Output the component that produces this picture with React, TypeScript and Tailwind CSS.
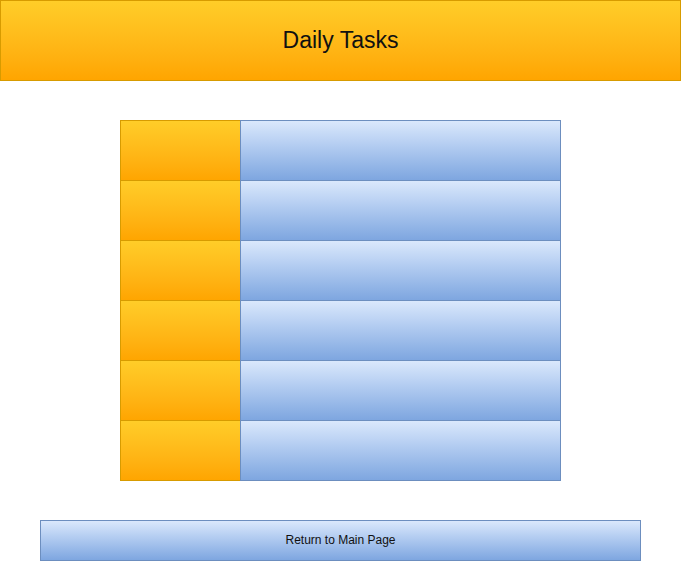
export default function App() {
  const rows = [0, 1, 2, 3, 4, 5];

  return (
    <div className="w-[681px] h-[561px] bg-white" style={{ fontFamily: '"Liberation Sans", Arial, sans-serif' }}>
      {/* Header */}
      <div className="flex h-[81px] w-[681px] items-center justify-center border border-[#d79b00] bg-linear-to-b from-[#ffcd28] to-[#ffa500]">
        <h1 className="text-[23px] leading-none text-[#111]">Daily Tasks</h1>
      </div>

      {/* Task table */}
      <div className="ml-[120px] mt-[39px] flex w-[441px] flex-col">
        {rows.map((r) => (
          <div key={r} className={r === 0 ? 'flex' : 'flex -mt-px'}>
            <div className="h-[61px] w-[121px] border border-[#d79b00] bg-linear-to-b from-[#ffcd28] to-[#ffa500]" />
            <div className="-ml-px h-[61px] w-[321px] border border-[#6c8ebf] bg-linear-to-b from-[#dae8fc] to-[#7ea6e0]" />
          </div>
        ))}
      </div>

      {/* Footer button */}
      <button className="ml-[40px] mt-[39px] flex h-[41px] w-[601px] items-center justify-center border border-[#6c8ebf] bg-linear-to-b from-[#dae8fc] to-[#7ea6e0] pb-[2px] text-[12px] text-[#111]">
        Return to Main Page
      </button>
    </div>
  );
}
